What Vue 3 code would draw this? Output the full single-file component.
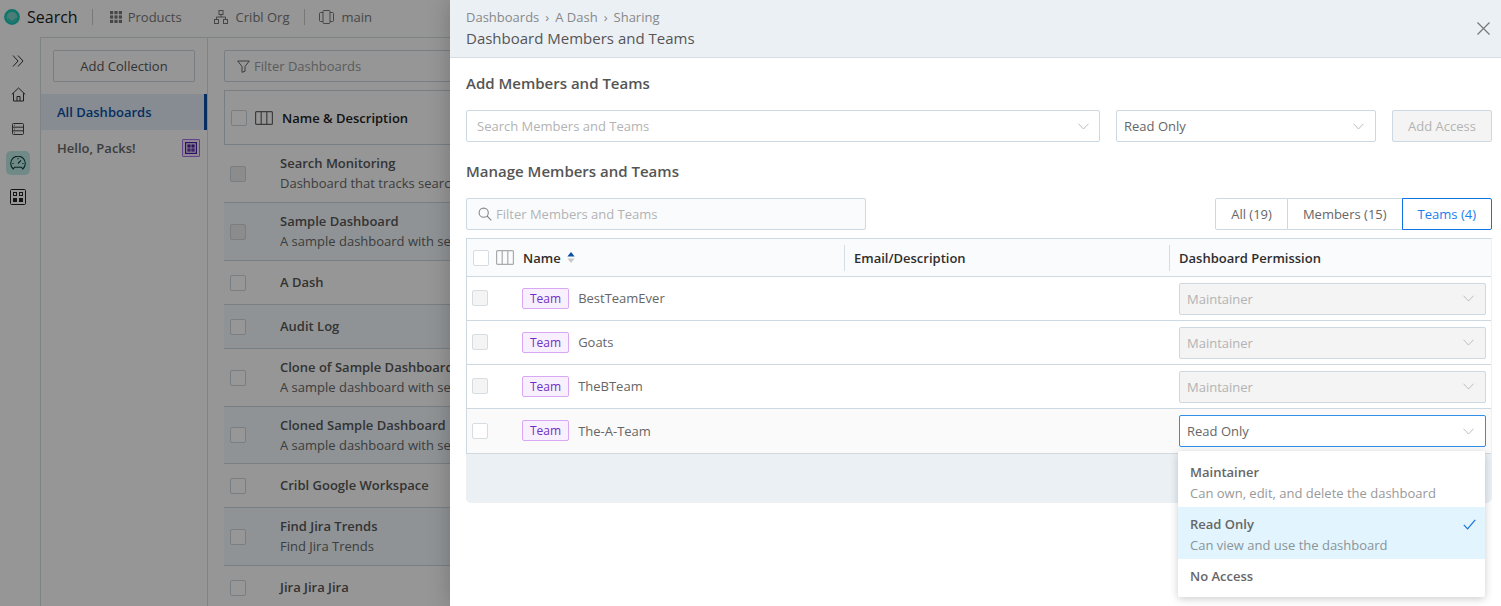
<template>
  <div class="app">
    <header class="topbar">
      <svg class="logo" width="16" height="16" viewBox="0 0 16 16">
        <circle cx="8" cy="8" r="7.9" fill="#1cc3b2" />
        <circle cx="8" cy="8" r="5.3" fill="#7ccfc8" />
        <path d="M4 9.5A4.4 4.4 0 0 0 12.3 9" fill="none" stroke="#1cc3b2" stroke-width="1.2" />
      </svg>
      <span class="app-name">Search</span>
      <span class="top-sep"></span>
      <svg class="top-icon" width="12" height="12" viewBox="0 0 12 12" fill="#777">
        <template v-for="y in [0, 4.4, 8.8]" :key="y">
          <rect v-for="x in [0, 4.4, 8.8]" :key="x" :x="x" :y="y" width="3.2" height="3.2" />
        </template>
      </svg>
      <span class="top-link products">Products</span>
      <svg class="top-icon" width="14" height="14" viewBox="0 0 14 14" fill="none" stroke="#777">
        <rect x="5" y="0.5" width="4" height="4" />
        <rect x="0.5" y="9.5" width="4" height="4" />
        <rect x="9.5" y="9.5" width="4" height="4" />
        <path d="M7 4.5V7M2.5 9.5V7h9v2.5" />
      </svg>
      <span class="top-link org">Cribl Org</span>
      <span class="top-sep short"></span>
      <svg class="top-icon" width="15" height="14" viewBox="0 0 15 14" fill="none" stroke="#777">
        <rect x="4" y="0.5" width="7" height="13" rx="1" />
        <path d="M4 2.5H1.5a1 1 0 0 0-1 1v7a1 1 0 0 0 1 1H4M11 2.5h2.5a1 1 0 0 1 1 1v7a1 1 0 0 1-1 1H11" />
      </svg>
      <span class="top-link">main</span>
    </header>

    <div class="body">
      <nav class="rail">
        <svg width="14" height="14" viewBox="0 0 14 14" fill="none" stroke="#333">
          <path d="M2 1.5l5 5.5-5 5.5M7 1.5l5 5.5-5 5.5" />
        </svg>
        <svg width="15" height="15" viewBox="0 0 15 15" fill="none" stroke="#333">
          <path d="M0.8 7.4L7.5 1l6.7 6.4M2.5 6.2V14h10V6.2M6 14V9.5h3V14" />
        </svg>
        <svg width="12" height="12" viewBox="0 0 12 12" fill="none" stroke="#444">
          <rect x="0.5" y="0.5" width="11" height="11" rx="1" />
          <path d="M0.5 4.2h11M0.5 7.8h11M2 2.3h0.8M2 6h0.8M2 9.8h0.8" />
        </svg>
        <span class="rail-active">
          <svg width="16" height="14" viewBox="0 0 16 14" fill="none" stroke="#0c3d3c" stroke-width="1.1">
            <path d="M3.2 13A7.3 7.3 0 1 1 12.8 13L11.5 11.2H4.5z" />
            <path d="M8 7.5l3-3.2M8 2v1.2M2.4 7.5h1.2M12.4 7.5h1.2" />
          </svg>
        </span>
        <svg width="16" height="16" viewBox="0 0 16 16" fill="none" stroke="#222">
          <rect x="0.5" y="0.5" width="15" height="15" rx="1" />
          <rect x="3.5" y="3.5" width="3" height="3" />
          <rect x="9.5" y="3.5" width="3" height="3" />
          <rect x="3" y="9" width="4" height="4" fill="#222" stroke="none" />
          <rect x="9" y="9" width="4" height="4" fill="#222" stroke="none" />
        </svg>
      </nav>

      <aside class="collections">
        <div class="add-wrap"><button class="add-collection">Add Collection</button></div>
        <div class="coll-item active">All Dashboards</div>
        <div class="coll-item">
          Hello, Packs!
          <span class="pack-badge">
            <svg width="12" height="12" viewBox="0 0 12 12" fill="none" stroke="#4d1d9e" stroke-width="1.2">
              <rect x="0.6" y="0.6" width="10.8" height="10.8" />
              <rect x="3" y="3" width="2" height="2" fill="#4d1d9e" />
              <rect x="7" y="3" width="2" height="2" fill="#4d1d9e" />
              <rect x="3" y="7" width="2" height="2" />
              <rect x="7" y="7" width="2" height="2" />
            </svg>
          </span>
        </div>
      </aside>

      <main class="dash-main">
        <div class="dash-filter">
          <svg width="13" height="13" viewBox="0 0 13 13" fill="none" stroke="#666">
            <path d="M0.7 1h11.6L8 6.5v4.8l-3 1V6.5z" />
          </svg>
          Filter Dashboards
        </div>
        <div class="dash-table">
          <div class="dash-head">
            <span class="cb"></span>
            <svg class="col-icon" width="18" height="14" viewBox="0 0 18 14" fill="none" stroke="#666" stroke-width="1.2">
              <rect x="0.6" y="0.6" width="16.8" height="12.8" rx="1" />
              <path d="M6.2 0.6v12.8M11.8 0.6v12.8" />
            </svg>
            <span class="dash-head-name">Name &amp; Description</span>
          </div>
          <div
            v-for="(d, i) in dashboards"
            :key="d.name"
            class="dash-row"
            :class="{ striped: i % 2 === 1 }"
            :style="{ height: d.h + 'px' }"
          >
            <span class="cb" :class="{ dim: i === 0 || i === 1 }"></span>
            <div class="dash-text">
              <div class="dash-name">{{ d.name }}</div>
              <div v-if="d.desc" class="dash-desc">{{ d.desc }}</div>
            </div>
          </div>
        </div>
      </main>
    </div>

    <div class="backdrop"></div>

    <section class="panel">
      <div class="panel-head">
        <div>
          <div class="crumbs">
            <span>Dashboards</span><i>›</i><span>A Dash</span><i>›</i><span>Sharing</span>
          </div>
          <div class="panel-title">Dashboard Members and Teams</div>
        </div>
        <svg class="close" width="13" height="13" viewBox="0 0 13 13" stroke="#777" stroke-width="1.2">
          <path d="M0.5 0.5l12 12M12.5 0.5l-12 12" />
        </svg>
      </div>

      <div class="panel-body">
        <h2 class="section-title first">Add Members and Teams</h2>
        <div class="add-row">
          <div class="field search-field">
            <span class="placeholder">Search Members and Teams</span>
            <svg class="chev" width="11" height="7" viewBox="0 0 11 7"><path d="M0.5 0.7l5 5.3 5-5.3" /></svg>
          </div>
          <div class="field perm-field">
            <span>Read Only</span>
            <svg class="chev" width="11" height="7" viewBox="0 0 11 7"><path d="M0.5 0.7l5 5.3 5-5.3" /></svg>
          </div>
          <button class="add-access">Add Access</button>
        </div>

        <h2 class="section-title">Manage Members and Teams</h2>
        <div class="filter-row">
          <div class="field filter-field">
            <svg width="14" height="14" viewBox="0 0 14 14" fill="none" stroke="#888" stroke-width="1.1">
              <circle cx="5.7" cy="5.7" r="4.6" />
              <path d="M9 9l4.3 4.3" />
            </svg>
            <span class="placeholder">Filter Members and Teams</span>
          </div>
          <div class="tabs">
            <span class="tab">All (19)</span>
            <span class="tab">Members (15)</span>
            <span class="tab selected">Teams (4)</span>
          </div>
        </div>

        <div class="table">
          <div class="thead grid-row">
            <div class="name-cell">
              <span class="check"></span>
              <svg class="col-icon" width="18" height="15" viewBox="0 0 18 15" fill="none" stroke="#aaa" stroke-width="1.2">
                <rect x="0.6" y="0.6" width="16.8" height="13.8" rx="1" />
                <path d="M6.2 0.6v13.8M11.8 0.6v13.8" />
              </svg>
              <span>Name</span>
              <svg class="sort" width="8" height="11" viewBox="0 0 8 11">
                <path d="M4 0l3.6 4.4H0.4z" fill="#0b4ea2" />
                <path d="M4 11L0.4 6.6h7.2z" fill="#c5c9cc" />
              </svg>
            </div>
            <div class="th">Email/Description</div>
            <div class="th">Dashboard Permission</div>
          </div>
          <div
            v-for="t in teams"
            :key="t.name"
            class="grid-row team-row"
            :class="{ open: t.open }"
          >
            <div class="name-cell">
              <span class="check" :class="{ disabled: !t.open }"></span>
              <span class="tag">Team</span>
              <span class="team-name">{{ t.name }}</span>
            </div>
            <div></div>
            <div class="perm-cell">
              <div class="perm-select" :class="{ focused: t.open }">
                <span>{{ t.perm }}</span>
                <svg class="chev" width="11" height="7" viewBox="0 0 11 7"><path d="M0.5 0.7l5 5.3 5-5.3" /></svg>
              </div>
            </div>
          </div>
          <div class="table-foot"></div>
        </div>
      </div>

      <div class="menu">
        <div
          v-for="o in options"
          :key="o.label"
          class="option"
          :class="{ current: o.current, plain: !o.desc }"
        >
          <div class="option-label">{{ o.label }}</div>
          <div v-if="o.desc" class="option-desc">{{ o.desc }}</div>
          <svg v-if="o.current" class="tick" width="13" height="11" viewBox="0 0 13 11" fill="none" stroke="#1a73d9" stroke-width="1.2">
            <path d="M0.8 5.8l3.8 4L12.2 0.8" />
          </svg>
        </div>
      </div>
    </section>
  </div>
</template>

<script setup>
const dashboards = [
  { name: 'Search Monitoring', desc: 'Dashboard that tracks search activity', h: 58 },
  { name: 'Sample Dashboard', desc: 'A sample dashboard with several charts', h: 58 },
  { name: 'A Dash', h: 44 },
  { name: 'Audit Log', h: 44 },
  { name: 'Clone of Sample Dashboard', desc: 'A sample dashboard with several charts', h: 58 },
  { name: 'Cloned Sample Dashboard', desc: 'A sample dashboard with several charts', h: 57 },
  { name: 'Cribl Google Workspace', h: 44 },
  { name: 'Find Jira Trends', desc: 'Find Jira Trends', h: 58 },
  { name: 'Jira Jira Jira', h: 44 }
]

const teams = [
  { name: 'BestTeamEver', perm: 'Maintainer' },
  { name: 'Goats', perm: 'Maintainer' },
  { name: 'TheBTeam', perm: 'Maintainer' },
  { name: 'The-A-Team', perm: 'Read Only', open: true }
]

const options = [
  { label: 'Maintainer', desc: 'Can own, edit, and delete the dashboard' },
  { label: 'Read Only', desc: 'Can view and use the dashboard', current: true },
  { label: 'No Access' }
]
</script>

<style>
html,
body {
  margin: 0;
  height: 100%;
  overflow: hidden;
}
</style>

<style scoped>
.app {
  position: relative;
  width: 1501px;
  height: 606px;
  overflow: hidden;
  background: #fafafa;
  font-family: "Open Sans", "Liberation Sans", sans-serif;
  font-size: 13px;
  color: #444;
}

.topbar {
  display: flex;
  align-items: center;
  height: 37px;
  padding: 0 0 4px 4px;
  box-sizing: border-box;
}

.app-name {
  margin-left: 7px;
  font-size: 16px;
  font-weight: 500;
  color: #1b1b1b;
}

.top-sep {
  width: 1px;
  height: 16px;
  margin: 0 17px 0 14px;
  background: #c8c8c8;
}

.top-sep.short {
  margin: 0 14px 0 14px;
}

.top-icon {
  flex: none;
}

.top-link {
  margin-left: 8px;
  color: #777;
}

.products {
  margin-left: 6px;
  margin-right: 32px;
}

.org {
  margin-left: 8px;
}

.body {
  display: flex;
  height: 569px;
}

.rail {
  width: 40px;
  flex: none;
  display: flex;
  flex-direction: column;
  align-items: center;
  box-sizing: border-box;
  padding: 17px 4px 0 0;
}

.rail > svg:nth-child(1) {
  margin-bottom: 19px;
}

.rail > svg:nth-child(2) {
  margin-bottom: 21px;
}

.rail > svg:nth-child(3) {
  margin-bottom: 16px;
}

.rail > svg:nth-child(5) {
  margin-top: 14px;
}

.rail-active {
  display: flex;
  align-items: center;
  justify-content: center;
  width: 24px;
  height: 24px;
  border-radius: 5px;
  background: #b9e6e2;
}

.collections {
  width: 166px;
  flex: none;
  border-left: 1px solid #d3dae0;
  border-top: 1px solid #d3dae0;
  border-right: 1px solid #d3dae0;
}

.add-wrap {
  padding: 12px;
}

.add-collection {
  display: block;
  width: 142px;
  height: 32px;
  border: 1px solid #c9d2d9;
  border-radius: 2px;
  background: #fafafa;
  font: inherit;
  color: #555;
  padding: 0;
}

.coll-item {
  position: relative;
  display: flex;
  align-items: center;
  height: 36px;
  padding-left: 16px;
  font-weight: 600;
  color: #666;
}

.coll-item.active {
  background: #dfeaf3;
  color: #0b4ea2;
  border-right: 3px solid #0b4ea2;
}

.pack-badge {
  position: absolute;
  left: 141px;
  top: 9px;
  display: flex;
  align-items: center;
  justify-content: center;
  width: 18px;
  height: 18px;
  box-sizing: border-box;
  border: 1px solid #a56ee6;
  border-radius: 1px;
  background: #efe4fb;
}

.dash-main {
  flex: 1;
  padding: 12px 0 0 16px;
  border-top: 1px solid #d3dae0;
}

.dash-filter {
  display: flex;
  align-items: center;
  gap: 4px;
  height: 32px;
  padding-left: 12px;
  border: 1px solid #c9d2d9;
  border-radius: 2px;
  box-sizing: border-box;
  color: #999;
}

.dash-table {
  margin-top: 8px;
  border-top: 1px solid #c9d2d9;
}

.dash-head {
  display: flex;
  align-items: center;
  height: 53px;
  padding-left: 6px;
  border-left: 1px solid #c9d2d9;
  border-bottom: 1px solid #c9d2d9;
}

.dash-head .col-icon {
  margin-left: 8px;
}

.dash-head-name {
  margin-left: 9px;
  font-weight: 600;
  color: #222;
}

.cb {
  width: 16px;
  height: 16px;
  flex: none;
  box-sizing: border-box;
  border: 1px solid #c9d2d9;
  border-radius: 2px;
  background: #fcfcfc;
}

.cb.dim {
  background: #eaeaea;
}

.dash-row {
  display: flex;
  align-items: center;
  box-sizing: border-box;
  padding-left: 6px;
  border-bottom: 1px solid #c9d2d9;
  white-space: nowrap;
}

.dash-row.striped {
  background: #eff6fb;
}

.dash-text {
  margin-left: 34px;
  margin-top: -1px;
  line-height: 20px;
}

.dash-name {
  font-weight: 600;
  color: #555;
}

.dash-desc {
  color: #666;
}

.backdrop {
  position: absolute;
  inset: 0;
  background: rgba(0, 0, 0, 0.4);
}

.panel {
  position: absolute;
  top: 0;
  right: 0;
  bottom: 0;
  width: 1051px;
  background: #fff;
  box-shadow: 0 0 22px rgba(0, 0, 0, 0.22);
}

.panel-head {
  display: flex;
  align-items: center;
  justify-content: space-between;
  height: 58px;
  box-sizing: border-box;
  padding: 0 10px 0 16px;
  background: #ebf0f5;
  border-bottom: 1px solid #d8dde1;
}

.crumbs {
  display: flex;
  line-height: 20px;
  margin-top: -1px;
  font-size: 13px;
  color: #888;
}

.crumbs i {
  margin: 0 6px;
  font-style: normal;
}

.panel-title {
  font-size: 15px;
  line-height: 22px;
  color: #555;
}

.close {
  margin-top: -1px;
  margin-right: 1px;
}

.panel-body {
  padding: 0 9px 0 16px;
}

.section-title {
  margin: 0;
  font-size: 15px;
  line-height: 20px;
  font-weight: 600;
  color: #555;
}

.section-title.first {
  padding-top: 15px;
}

.add-row {
  display: flex;
  margin-top: 17px;
  margin-bottom: 19px;
}

.field {
  display: flex;
  align-items: center;
  justify-content: space-between;
  height: 32px;
  box-sizing: border-box;
  border: 1px solid #ccd9e2;
  border-radius: 2px;
  background: #fff;
  color: #666;
}

.search-field {
  width: 634px;
  padding: 0 10px;
}

.perm-field {
  width: 260px;
  margin-left: 16px;
  padding: 0 11px 0 7px;
}

.placeholder {
  color: #b3b3b3;
}

.chev {
  flex: none;
  fill: none;
  stroke: #b8bec3;
}

.add-access {
  width: 100px;
  height: 32px;
  margin-left: 16px;
  padding: 0;
  border: 1px solid #ccd9e2;
  border-radius: 2px;
  background: #f4f4f4;
  font: inherit;
  color: #b3b3b3;
}

.filter-row {
  display: flex;
  justify-content: space-between;
  margin-top: 17px;
  margin-bottom: 8px;
}

.filter-field {
  width: 400px;
  padding: 0 11px;
  justify-content: flex-start;
  gap: 4px;
  background: #f9fbfd;
}

.tabs {
  display: flex;
  height: 32px;
}

.tab {
  display: flex;
  align-items: center;
  padding: 0 15px;
  color: #666;
  border: 1px solid #ccd9e2;
  border-left: none;
}

.tab:first-child {
  border-left: 1px solid #ccd9e2;
  border-radius: 2px 0 0 2px;
}

.tab.selected {
  border: 1px solid #0f73e6;
  border-radius: 0 2px 2px 0;
  color: #1a7df0;
  margin-left: -1px;
}

.table {
  border-top: 1px solid #ccd9e2;
  border-left: 1px solid #ccd9e2;
  border-right: 1px solid #f0f0f0;
  border-radius: 0 0 6px 6px;
}

.grid-row {
  display: grid;
  grid-template-columns: 377px 325px 1fr;
}

.thead {
  height: 37px;
  align-items: center;
  background: #fafbfc;
  border-bottom: 1px solid #ccd9e2;
  font-weight: 600;
  color: #2e2e2e;
}

.name-cell {
  display: flex;
  align-items: center;
  padding-left: 5px;
}

.thead .name-cell {
  padding-left: 6px;
}

.th {
  border-left: 1px solid #d5dde2;
  height: 26px;
  line-height: 26px;
  padding-left: 9px;
}

.thead .col-icon {
  margin-left: 7px;
  margin-right: 9px;
}

.sort {
  margin-left: 6px;
}

.check {
  width: 16px;
  height: 16px;
  flex: none;
  box-sizing: border-box;
  border: 1px solid #d5dde2;
  border-radius: 2px;
  background: #fff;
}

.check.disabled {
  background: #f4f4f4;
}

.team-row {
  height: 44px;
  box-sizing: border-box;
  align-items: center;
  border-bottom: 1px solid #ccd9e2;
}

.team-row .name-cell {
  padding-bottom: 2px;
}

.team-row.open {
  height: 45px;
  background: #fafafa;
  border-bottom-color: #d3d8dc;
}

.team-row.open .name-cell {
  padding-bottom: 0;
}

.team-row.open .tag {
  margin-top: -2px;
}

.tag {
  margin-top: 2px;
  margin-left: 34px;
  padding: 0 7px;
  height: 21px;
  line-height: 19px;
  font-size: 12px;
  box-sizing: border-box;
  border: 1px solid #d8a8f5;
  border-radius: 2px;
  background: #f8f0ff;
  color: #6f2fc6;
}

.team-name {
  margin-left: 9px;
  color: #666;
}

.perm-cell {
  padding-left: 10px;
  padding-right: 5px;
}

.perm-select {
  display: flex;
  align-items: center;
  justify-content: space-between;
  height: 32px;
  box-sizing: border-box;
  padding: 0 11px 0 7px;
  border: 1px solid #ccd9e2;
  border-radius: 2px;
  background: #f4f4f4;
  color: #b3b3b3;
}

.perm-select.focused {
  background: #fff;
  border-color: #2f8fe8;
  color: #666;
}

.table-foot {
  height: 49px;
  background: #ebf0f5;
  border-radius: 0 0 6px 6px;
  margin-left: -1px;
  margin-right: -1px;
}

.menu {
  position: absolute;
  left: 728px;
  top: 451px;
  width: 307px;
  background: #fff;
  border-radius: 2px;
  box-shadow: 0 2px 8px rgba(0, 0, 0, 0.2);
}

.option {
  position: relative;
  padding: 11px 12px 3px;
  line-height: 21px;
  height: 52px;
  box-sizing: border-box;
}

.option:first-child {
  height: 56px;
}

.option.plain {
  height: 38px;
  padding-top: 7px;
}

.option.current {
  background: #e2f4fd;
  padding-top: 7px;
}

.option-label {
  font-weight: 600;
  color: #666;
}

.option-desc {
  color: #999;
}

.option.current .option-desc {
  color: #8a9499;
}

.tick {
  position: absolute;
  right: 9px;
  top: 12px;
}
</style>
